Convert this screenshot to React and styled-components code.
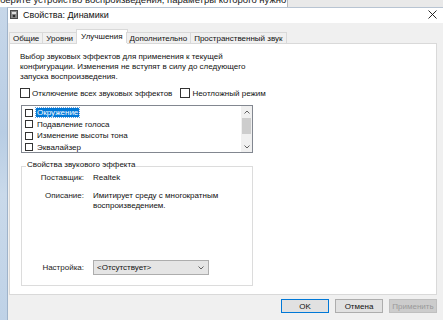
import React from 'react';
import styled, { createGlobalStyle } from 'styled-components';

const FONT = '"Liberation Sans", Arial, sans-serif';

const GlobalStyle = createGlobalStyle`
  *, *::before, *::after {
    box-sizing: border-box;
  }
  html, body {
    margin: 0;
    padding: 0;
  }
  body {
    font-family: ${FONT};
    font-size: 8px;
    color: #000;
    background: #c9d9ea;
  }
`;

const Page = styled.div`
  width: 443px;
  height: 320px;
  overflow: hidden;
  display: flex;
  flex-direction: column;
`;

const Behind = styled.div`
  height: 7px;
  flex: none;
  display: flex;
  background: #e9e9e9;
  overflow: hidden;
`;

const BehindText = styled.div`
  width: 288px;
  background: #fff;
  border-right: 1px solid #b9b9b9;
  display: flex;
  align-items: flex-end;
  font-size: 9.5px;
  line-height: 14px;
  color: #1a1a1a;
  white-space: nowrap;
  overflow: hidden;
`;

const Main = styled.div`
  flex: 1;
  display: flex;
  min-height: 0;
`;

const DesktopEdge = styled.div`
  width: 7px;
  flex: none;
  background: linear-gradient(to bottom, #c7d7e9, #b8cde4 40%, #c9d9ea 60%, #bfd2e7);
`;

const Window = styled.div`
  flex: 1;
  display: flex;
  flex-direction: column;
  background: #f0f0f0;
  border-left: 1px solid #9fb3ca;
  border-top: 1px solid #b8c4d2;
`;

const TitleBar = styled.div`
  height: 15px;
  flex: none;
  background: #fff;
  display: flex;
  align-items: center;
  padding: 0 0 2px 2px;
`;

const Title = styled.span`
  font-size: 9px;
  color: #111;
  margin-left: 5px;
  flex: 1;
`;

const Close = styled.div`
  width: 9px;
  height: 9px;
  margin-right: 6px;
  display: flex;
`;

const Body = styled.div`
  flex: 1;
  display: flex;
  flex-direction: column;
  padding: 6px 6px 0 1px;
`;

const TabBar = styled.div`
  display: flex;
  align-items: flex-end;
  height: 14px;
  flex: none;
  position: relative;
  z-index: 1;
`;

const Tab = styled.div`
  height: ${(p) => (p.$active ? 15 : 11)}px;
  padding: 0 ${(p) => (p.$active ? 4 : 3)}px ${(p) => (p.$active ? 2 : 0)}px;
  margin: 0 ${(p) => (p.$active ? -1 : 0)}px ${(p) => (p.$active ? -1 : 0)}px -1px;
  background: ${(p) => (p.$active ? '#fff' : '#f0f0f0')};
  border: 1px solid #d9d9d9;
  border-bottom: none;
  display: flex;
  align-items: center;
  white-space: nowrap;
  color: #111;
  &:first-child {
    margin-left: 0;
  }
`;

const Panel = styled.div`
  height: 252px;
  flex: none;
  background: #fff;
  border: 1px solid #d9d9d9;
  padding: 8px 0 0 10px;
  display: flex;
  flex-direction: column;
`;

const Intro = styled.p`
  margin: 0;
  line-height: 10px;
  width: 240px;
  color: #111;
`;

const Options = styled.div`
  display: flex;
  align-items: center;
  margin-top: 6px;
  height: 10px;
  gap: 8px;
  flex: none;
`;

const CheckLabel = styled.label`
  display: flex;
  align-items: center;
  gap: 2px;
  color: #111;
`;

const Box = styled.span`
  width: ${(p) => p.$size}px;
  height: ${(p) => p.$size}px;
  border: 1px solid #333;
  background: #fff;
  flex: none;
`;

const ListBox = styled.div`
  margin: 7px 0 0 1px;
  width: 232px;
  height: 48px;
  flex: none;
  border: 1px solid #828790;
  display: flex;
  overflow: hidden;
`;

const Items = styled.div`
  flex: 1;
  padding: 1px 0 0 3px;
  overflow: hidden;
`;

const Item = styled.div`
  height: 11.5px;
  display: flex;
  align-items: center;
  gap: 3px;
  color: #111;
`;

const ItemText = styled.span`
  line-height: 9px;
  padding: 0 1px;
  background: ${(p) => (p.$selected ? '#0078d7' : 'transparent')};
  color: ${(p) => (p.$selected ? '#fff' : '#111')};
  outline: ${(p) => (p.$selected ? '1px dotted #6a9fd6' : 'none')};
`;

const ScrollBar = styled.div`
  width: 11px;
  flex: none;
  background: #f0f0f0;
  display: flex;
  flex-direction: column;
`;

const ScrollArrow = styled.div`
  height: 11px;
  display: flex;
  align-items: center;
  justify-content: center;
`;

const Track = styled.div`
  flex: 1;
  display: flex;
  flex-direction: column;
`;

const Thumb = styled.div`
  height: 16px;
  margin: 1px 1px 0;
  background: #cdcdcd;
`;

const Group = styled.div`
  position: relative;
  margin: 13px 0 0 1px;
  width: 232px;
  height: 120px;
  flex: none;
  border: 1px solid #dcdcdc;
  padding: 6px 0 10px 0;
  display: flex;
  flex-direction: column;
`;

const GroupTitle = styled.span`
  position: absolute;
  top: -7px;
  left: 4px;
  padding: 0 1px;
  line-height: 10px;
  background: #fff;
  color: #111;
`;

const Prop = styled.div`
  display: grid;
  grid-template-columns: 62px 1fr;
  column-gap: 9px;
  align-items: ${(p) => (p.$center ? 'center' : 'start')};
  margin-top: ${(p) => p.$gap || 0}px;
  line-height: 10px;
  color: #111;
`;

const PropLabel = styled.span`
  text-align: right;
  color: #222;
`;

const Spacer = styled.div`
  flex: 1;
`;

const Combo = styled.div`
  width: 116px;
  height: 15px;
  border: 1px solid #adadad;
  background: #e5e5e5;
  display: flex;
  align-items: center;
  padding: 0 4px 0 3px;
  justify-content: space-between;
  color: #111;
`;

const Footer = styled.div`
  display: flex;
  justify-content: flex-end;
  gap: 6px;
  margin-top: 4px;
  flex: none;
`;

const Button = styled.div`
  width: 48px;
  height: 14px;
  display: flex;
  align-items: center;
  justify-content: center;
  background: ${(p) => (p.$disabled ? '#cccccc' : '#e1e1e1')};
  border: 1px solid
    ${(p) => (p.$default ? '#0078d7' : p.$disabled ? '#bfbfbf' : '#adadad')};
  color: ${(p) => (p.$disabled ? '#9a9a9a' : '#111')};
`;

const Chevron = ({ up }) => (
  <svg width="6" height="4" viewBox="0 0 6 4">
    <polyline
      points={up ? '0.5,3.5 3,1 5.5,3.5' : '0.5,0.5 3,3 5.5,0.5'}
      fill="none"
      stroke="#606060"
      strokeWidth="1"
    />
  </svg>
);

const SpeakerIcon = () => (
  <svg width="8" height="9" viewBox="0 0 8 9">
    <rect x="0.5" y="0.5" width="7" height="8" fill="#8a8a8a" stroke="#4a4a4a" />
    <rect x="2" y="2" width="4" height="2" fill="#e0e0e0" />
    <circle cx="4" cy="6" r="1.3" fill="#2e2e2e" />
  </svg>
);

// the fifth row is scrolled almost out of view: only its box shows
const effects = ['Окружение', 'Подавление голоса', 'Изменение высоты тона', 'Эквалайзер', ''];

const tabs = ['Общие', 'Уровни', 'Улучшения', 'Дополнительно', 'Пространственный звук'];

export default function App() {
  return (
    <Page>
      <GlobalStyle />
      <Behind>
        <BehindText>берите устройство воспроизведения, параметры которого нужно</BehindText>
      </Behind>
      <Main>
        <DesktopEdge />
        <Window>
          <TitleBar>
            <SpeakerIcon />
            <Title>Свойства: Динамики</Title>
            <Close>
              <svg width="9" height="9" viewBox="0 0 9 9">
                <path d="M0.5 0.5 L8.5 8.5 M8.5 0.5 L0.5 8.5" stroke="#111" strokeWidth="0.9" />
              </svg>
            </Close>
          </TitleBar>
          <Body>
            <TabBar>
              {tabs.map((t) => (
                <Tab key={t} $active={t === 'Улучшения'}>
                  {t}
                </Tab>
              ))}
            </TabBar>
            <Panel>
              <Intro>
                Выбор звуковых эффектов для применения к текущей конфигурации. Изменения не
                вступят в силу до следующего запуска воспроизведения.
              </Intro>
              <Options>
                <CheckLabel>
                  <Box $size={10} />
                  Отключение всех звуковых эффектов
                </CheckLabel>
                <CheckLabel>
                  <Box $size={10} />
                  Неотложный режим
                </CheckLabel>
              </Options>
              <ListBox>
                <Items>
                  {effects.map((e, i) => (
                    <Item key={i}>
                      <Box $size={8} />
                      {e && <ItemText $selected={i === 0}>{e}</ItemText>}
                    </Item>
                  ))}
                </Items>
                <ScrollBar>
                  <ScrollArrow>
                    <Chevron up />
                  </ScrollArrow>
                  <Track>
                    <Thumb />
                  </Track>
                  <ScrollArrow>
                    <Chevron />
                  </ScrollArrow>
                </ScrollBar>
              </ListBox>
              <Group>
                <GroupTitle>Свойства звукового эффекта</GroupTitle>
                <Prop>
                  <PropLabel>Поставщик:</PropLabel>
                  <span>Realtek</span>
                </Prop>
                <Prop $gap={8}>
                  <PropLabel>Описание:</PropLabel>
                  <span>
                    Имитирует среду с многократным
                    <br />
                    воспроизведением.
                  </span>
                </Prop>
                <Spacer />
                <Prop $center>
                  <PropLabel>Настройка:</PropLabel>
                  <Combo>
                    <span>&lt;Отсутствует&gt;</span>
                    <Chevron />
                  </Combo>
                </Prop>
              </Group>
            </Panel>
            <Footer>
              <Button $default>OK</Button>
              <Button>Отмена</Button>
              <Button $disabled>Применить</Button>
            </Footer>
          </Body>
        </Window>
      </Main>
    </Page>
  );
}
